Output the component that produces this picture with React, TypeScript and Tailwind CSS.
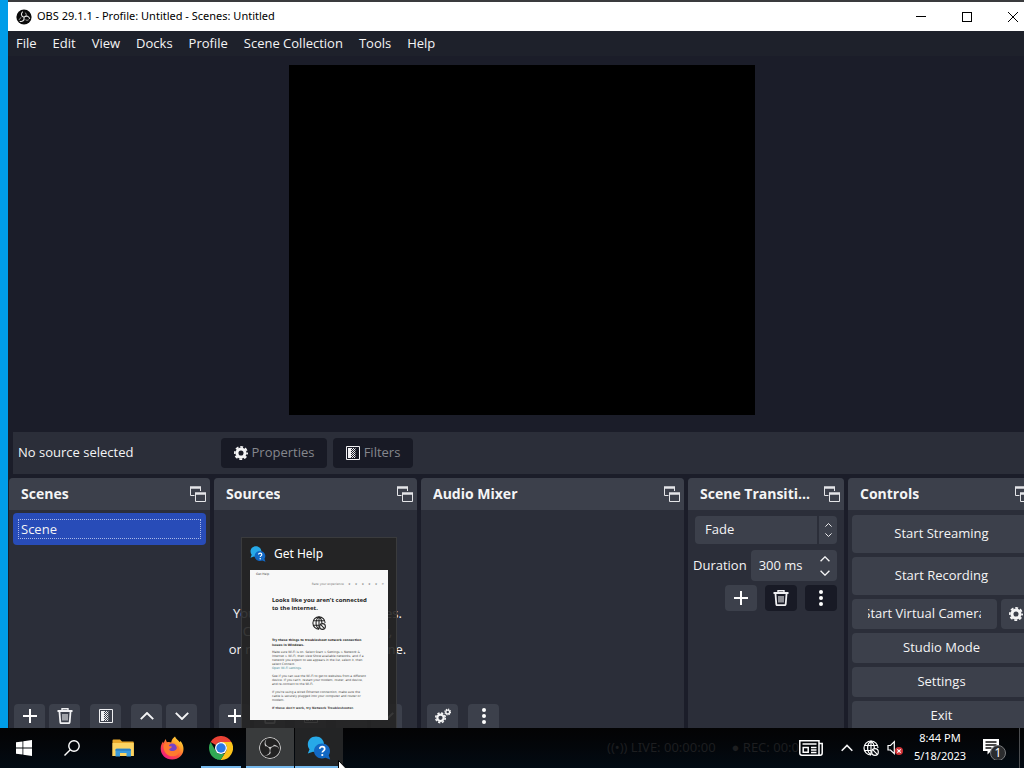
import type { ReactNode } from "react";
import { SiObsstudio } from "react-icons/si";

type IconProps = { className?: string };

function PopOutIcon({ className = "" }: IconProps) {
  return (
    <svg viewBox="0 0 16 16" className={`h-4 w-4 shrink-0 ${className}`} fill="none" stroke="#e4e5e8">
      <path d="M0 1.500h11" strokeWidth="2.400" />
      <path d="M.5 2v7.500h4M10.500 2v3" />
      <path d="M5 7.500h11" strokeWidth="2.400" />
      <path d="M5.500 8v7.500h10V8" />
    </svg>
  );
}

function PlusIcon() {
  return (
    <svg viewBox="0 0 14 14" className="h-3.5 w-3.5" stroke="#fefefe" strokeWidth="2">
      <path d="M7 0v14M0 7h14" />
    </svg>
  );
}

function TrashIcon() {
  return (
    <svg viewBox="0 0 16 16" className="h-4 w-4" fill="none" stroke="#f0f0f2">
      <path d="M.5 3h15" strokeWidth="2" />
      <path d="M5 2.200V.8h6v1.400" strokeWidth="1.400" />
      <path d="M2.500 4l.8 10.200q.1 1 1 1h7.400q.9 0 1-1L13.500 4" strokeWidth="1.800" />
      <path d="M6 6v6.500M8 6v6.500M10 6v6.500" strokeWidth="1.100" />
    </svg>
  );
}

function FilterIcon({ className = "h-3.5 w-3.5" }: IconProps) {
  return (
    <svg viewBox="0 0 14 14" className={className} fill="none">
      <path d="M.5.5h13v13H.5z" stroke="#f0f0f2" />
      <path d="M2 2h3v10H2z" fill="#f0f0f2" />
      <path d="M5.500 2v10M7.500 2v10" stroke="#f0f0f2" strokeDasharray="1 1" />
      <path d="M6.500 3v9M8.500 3v9" stroke="#f0f0f2" strokeDasharray="1 1" />
      <path d="M9.500 2v10" stroke="#85878d" strokeDasharray="1 1" />
    </svg>
  );
}

function ChevronIcon({ down, className = "h-2 w-3.5" }: IconProps & { down?: boolean }) {
  return (
    <svg viewBox="0 0 14 8" className={className} fill="none" stroke="#f4f4f5" strokeWidth="1.900">
      <path d={down ? "M.8 .8L7 7 13.200 .8" : "M.8 7.200L7 1 13.200 7.200"} />
    </svg>
  );
}

function DotsIcon() {
  return (
    <svg viewBox="0 0 4 16" className="h-4 w-1" fill="#fefefe">
      <circle cx="2" cy="2" r="2" />
      <circle cx="2" cy="8" r="2" />
      <circle cx="2" cy="14" r="2" />
    </svg>
  );
}

function GearIcon({ className = "h-3.5 w-3.5" }: IconProps) {
  return (
    <svg viewBox="0 0 16 16" className={className} fill="none" stroke="#f4f4f5">
      <circle cx="8" cy="8" r="4.600" strokeWidth="3.400" />
      <circle cx="8" cy="8" r="7" strokeWidth="2" strokeDasharray="3.300 2.198" strokeDashoffset="1.650" />
    </svg>
  );
}

function GearsIcon() {
  return (
    <svg viewBox="0 0 16 16" className="h-4 w-4" fill="none" stroke="#f4f4f5">
      <circle cx="5.500" cy="9.800" r="3.200" strokeWidth="2.200" />
      <circle cx="5.500" cy="9.800" r="4.800" strokeWidth="1.600" strokeDasharray="2.200 1.570" />
      <circle cx="12.700" cy="4" r="1.900" strokeWidth="1.400" />
      <circle cx="12.700" cy="4" r="2.900" strokeWidth="1.100" strokeDasharray="1.300 .977" />
    </svg>
  );
}

function ObsTitleIcon() {
  return (
    <svg viewBox="0 0 16 16" className="ml-2 h-4 w-4" fill="none" stroke="#e8e8e8" strokeWidth="1.100">
      <circle cx="8" cy="8" r="7.600" fill="#0a0a0a" stroke="none" />
      <path d="M8 8.300C4.800 7.500 4.800 4.200 6.800 2.600" />
      <path d="M8 8.300c2.300-2.400 5.200-.9 5.700 1.600" />
      <path d="M8 8.300c.8 3.200-1.900 4.800-4.300 3.900" />
      <path d="M10.200 6.800c.3-1.500-.3-2.700-1.300-3.300M9.500 10.800c1.300.7 2.400.5 3.200-.1M5.300 8.700c-1.300.4-2 1.300-2.100 2.200" strokeWidth=".7" />
    </svg>
  );
}

function OfflineGlobeIcon({ className = "" }: IconProps) {
  return (
    <svg viewBox="0 0 16 16" className={className} fill="none" stroke="currentColor" strokeWidth="1.200">
      <path d="M8 15A7 7 0 1 1 15 8" />
      <path d="M8 1C3.500 4 3.500 12 8 15M8 1c2.300 1.700 3.300 4.200 3.300 7M8 1v14M1.500 5.500h13M1.500 10.500H8" />
      <circle cx="12" cy="12" r="3.300" />
      <path d="M9.700 9.700l4.600 4.600" />
    </svg>
  );
}

function GetHelpIcon({ className = "" }: IconProps) {
  return (
    <svg viewBox="0 0 24 24" className={className}>
      <path d="M9 .5C4 .5.8 4 .8 8.200c0 2 .6 3.700 1.700 5L.8 17.500 6 15.800c5 1.500 11-2 11-7.600C17 4 13.500.5 9 .5z" fill="#27a9e8" />
      <path d="M15 7.500c-4.500 0-8 3.400-8 7.500s3.500 7.500 8 7.500c1.300 0 2.500-.2 3.500-.7l4.700 1.700-1.500-4.200c.8-1.200 1.300-2.700 1.300-4.300 0-4.100-3.500-7.500-8-7.500z" fill="#1268c4" />
      <path d="M12.800 12.800c0-3 4.900-2.800 4.900.1 0 1.900-2.400 1.900-2.400 3.700" fill="none" stroke="#fff" strokeWidth="1.700" />
      <circle cx="15.300" cy="19" r="1.100" fill="#fff" />
    </svg>
  );
}

function WindowsIcon() {
  return (
    <svg viewBox="0 0 16 16" className="h-4 w-4" fill="#fff">
      <path d="M0 2.300l6.500-.9v6.200H0zM7.300 1.300L16 0v7.600H7.300zM0 8.400h6.500v6.200L0 13.700zM7.300 8.400H16V16l-8.700-1.300z" />
    </svg>
  );
}

function SearchIcon() {
  return (
    <svg viewBox="0 0 16 16" className="h-4 w-4" fill="none" stroke="#fff" strokeWidth="1.400">
      <circle cx="10" cy="6" r="5.200" />
      <path d="M6.300 9.700L.5 15.500" />
    </svg>
  );
}

function ExplorerIcon() {
  return (
    <svg viewBox="0 0 22 18" className="h-[18px] w-[22px]">
      <path d="M.5 1.500Q.5.500 1.500.5H8l2 2h11q.8 0 .8 1V17H.5z" fill="#e9a92c" />
      <path d="M.5 4h21.300v13H.5z" fill="#fcd462" />
      <path d="M3.500 17.500V11q0-1.200 1.200-1.200h13q1.200 0 1.200 1.200v6.500h-4.400V14H8v3.500z" fill="#3b9bdc" />
      <path d="M3.500 11q0-1.200 1.200-1.200h13q1.200 0 1.200 1.200v.8H3.500z" fill="#2c80c4" />
    </svg>
  );
}

function FirefoxIcon() {
  return (
    <svg viewBox="0 0 24 24" className="h-6 w-6">
      <defs>
        <linearGradient id="fox" x1="1" y1="0" x2=".2" y2="1">
          <stop offset="0" stopColor="#fff044" />
          <stop offset=".35" stopColor="#ffa52b" />
          <stop offset=".65" stopColor="#ff4b3e" />
          <stop offset="1" stopColor="#f0168c" />
        </linearGradient>
      </defs>
      <path
        d="M15 .5c1 2.600 3.200 3.700 4.800 5.800l.7-1.300c2.200 2.800 3 5.200 3 8C23.500 19 18.500 23.500 12.200 23.500 5.700 23.500.7 18.800.7 12.700c0-3 1-5.400 2.300-7.200l.5 1.800L5.500 3l1.400 3.200c1.600-.5 3.100-.4 4.300.3C11.500 4 13 1.800 15 .5z"
        fill="url(#fox)"
      />
      <circle cx="12.200" cy="12.600" r="5" fill="#7542c8" />
      <path d="M3.500 9c2-2.500 5-2.500 7.700-1.600-1.500.5-2 1.300-2.300 2.500l3.300.9c-.8 1.500-2.700 1.400-3 2.700.8 2 4.700 2.100 6.800.2 1.300-1.200 1-3.500-.6-5 3.500.6 4.700 3.700 4 6.700-1 4-5.600 5.800-9.600 4.500C5.500 18.500 3 14 3.500 9z" fill="#ff7a2e" />
    </svg>
  );
}

function ChromeIcon() {
  return (
    <svg viewBox="0 0 24 24" className="h-6 w-6">
      <path d="M1.600 6A12 12 0 0 1 22.400 6H12a6 6 0 0 0-5.200 3z" fill="#e94235" />
      <path d="M1.600 6L6.800 15A6 6 0 0 0 12 18l-3 5.600A12 12 0 0 1 1.600 6z" fill="#31a853" />
      <path d="M22.400 6A12 12 0 0 1 11.500 24L17.200 15A6 6 0 0 0 17.200 9L12 6z" fill="#fcc31b" />
      <path d="M6.800 15l2.200 3.800 3-.8 3.300-.1L11.500 24a12 12 0 0 1-10-6.300z" fill="#31a853" />
      <circle cx="12" cy="12" r="6" fill="#fff" />
      <circle cx="12" cy="12" r="4.700" fill="#2979e6" />
    </svg>
  );
}

function NewsIcon() {
  return (
    <svg viewBox="0 0 24 16" className="h-4 w-6" fill="none" stroke="#fff" strokeWidth="1.500">
      <path d="M.8.8H20v14.400H3q-2.200 0-2.200-2.200zM20 3.500h3.200V13q0 2.200-2 2.200H19" />
      <path d="M3.500 4H17.500M12 7.500h5.500M12 10h5.500M12 12.500h5.500" />
      <path d="M4.200 7.500h5v4.800h-5z" />
    </svg>
  );
}

function MutedIcon() {
  return (
    <svg viewBox="0 0 16 16" className="h-4 w-4">
      <path d="M1 5.500h2.500L7.300 1.700v12L3.500 10H1z" fill="none" stroke="#fff" strokeWidth="1.200" />
      <circle cx="12" cy="11" r="4" fill="#d13438" />
      <path d="M10.300 9.300l3.400 3.400M13.700 9.300l-3.400 3.400" stroke="#fff" strokeWidth="1.100" />
    </svg>
  );
}

const menus = ["File", "Edit", "View", "Docks", "Profile", "Scene Collection", "Tools", "Help"];

function TitleBar() {
  return (
    <header className="flex h-[29px] shrink-0 items-center bg-white text-black">
      <ObsTitleIcon />
      <h1 className="ml-[5px] flex-1 font-['Noto_Sans'] text-[11px]">OBS 29.1.1 - Profile: Untitled - Scenes: Untitled</h1>
      <button aria-label="Minimize" className="flex h-full w-[46px] items-center justify-center">
        <span className="h-px w-2.5 bg-black" />
      </button>
      <button aria-label="Maximize" className="flex h-full w-[46px] items-center justify-center">
        <span className="h-2.5 w-2.5 border border-black" />
      </button>
      <button aria-label="Close" className="flex h-full w-[46px] items-center justify-center">
        <svg viewBox="0 0 10 10" className="h-2.5 w-2.5" stroke="#000">
          <path d="M0 0l10 10M10 0L0 10" />
        </svg>
      </button>
    </header>
  );
}

function Dock({ title, children }: { title: string; children?: ReactNode }) {
  return (
    <section className="flex min-w-0 flex-col overflow-hidden rounded-t bg-[#2b2e39]">
      <div className="flex h-8 shrink-0 items-center justify-between gap-3 bg-[#3c404b] pr-1 pl-3">
        <h2 className="truncate text-sm font-bold">{title}</h2>
        <PopOutIcon />
      </div>
      {children}
    </section>
  );
}

function ToolButton({ label, children }: { label: string; children: ReactNode }) {
  return (
    <button aria-label={label} className="flex h-6 w-[31px] shrink-0 items-center justify-center rounded-t bg-[#3c404b]">
      {children}
    </button>
  );
}

function ListTools() {
  return (
    <div className="mt-auto flex gap-1 pl-[5px]">
      <ToolButton label="Add"><PlusIcon /></ToolButton>
      <ToolButton label="Remove"><TrashIcon /></ToolButton>
      <div className="mx-1.5"><ToolButton label="Filters"><FilterIcon /></ToolButton></div>
      <ToolButton label="Move up"><ChevronIcon /></ToolButton>
      <ToolButton label="Move down"><ChevronIcon down /></ToolButton>
    </div>
  );
}

function SourcesDock() {
  return (
    <Dock title="Sources">
      <div className="flex flex-1 items-end justify-center pb-[46px]">
        <p className="pl-1 text-center leading-[18px] whitespace-nowrap">
          You don't have any sources.
          <br />
          Click the + button below,
          <br />
          or right click here to add one.
        </p>
      </div>
      <ListTools />
    </Dock>
  );
}

function TransitionsDock() {
  return (
    <Dock title="Scene Transitions">
      <div className="flex flex-col gap-1 pt-1.5 pr-[7px] pl-[5px]">
        <div className="relative ml-0.5 h-7 rounded bg-[#3c404b]">
          <select aria-label="Transition" className="h-full w-full appearance-none pl-2.5">
            <option>Fade</option>
          </select>
          <span className="pointer-events-none absolute inset-y-0 right-0 flex w-5 flex-col items-center justify-center gap-1.5 border-l-2 border-[#2b2e39]">
            <ChevronIcon className="h-1 w-[7px]" />
            <ChevronIcon down className="h-1 w-[7px]" />
          </span>
        </div>
        <div className="flex items-center justify-between gap-1 pt-0.5">
          <label htmlFor="duration">Duration</label>
          <div className="flex h-[31px] w-[87px] items-center rounded bg-[#3c404b]">
            <input id="duration" defaultValue="300 ms" className="w-0 flex-1 pl-2 outline-none" />
            <div className="flex w-6 flex-col items-center gap-2">
              <button aria-label="Increase"><ChevronIcon className="h-1.5 w-2.5" /></button>
              <button aria-label="Decrease"><ChevronIcon down className="h-1.5 w-2.5" /></button>
            </div>
          </div>
        </div>
        <div className="flex justify-end gap-2">
          <button aria-label="Add transition" className="flex h-[26px] w-8 items-center justify-center rounded bg-[#3c404b]"><PlusIcon /></button>
          <button aria-label="Remove transition" className="flex h-[26px] w-8 items-center justify-center rounded bg-[#181a25]"><TrashIcon /></button>
          <button aria-label="Transition properties" className="flex h-[26px] w-8 items-center justify-center rounded bg-[#181a25]"><DotsIcon /></button>
        </div>
      </div>
    </Dock>
  );
}

function ControlsDock() {
  return (
    <Dock title="Controls">
      <div className="flex flex-col gap-1 px-1 pt-[5px]">
        <button className="h-[38px] rounded bg-[#3c404b]">Start Streaming</button>
        <button className="h-[38px] rounded bg-[#3c404b]">Start Recording</button>
        <div className="flex gap-1">
          <button className="h-[30px] min-w-0 flex-1 rounded bg-[#3c404b] px-4">
            <span className="flex justify-center overflow-hidden whitespace-nowrap">Start Virtual Camera</span>
          </button>
          <button aria-label="Configure virtual camera" className="flex h-[30px] w-[30px] items-center justify-center rounded bg-[#3c404b]">
            <GearIcon />
          </button>
        </div>
        <button className="h-[30px] rounded bg-[#3c404b]">Studio Mode</button>
        <button className="h-[30px] rounded bg-[#3c404b]">Settings</button>
        <button className="h-[30px] rounded bg-[#3c404b]">Exit</button>
      </div>
    </Dock>
  );
}

function GetHelpPreview() {
  return (
    <aside className="absolute bottom-10 left-[241px] h-[191px] w-[156px] border border-b-0 border-[#3a3b3d] bg-[#242424]/90 px-2 font-['Noto_Sans'] text-white">
      <div className="flex h-8 items-center gap-2">
        <GetHelpIcon className="h-4 w-4" />
        <h2 className="text-xs">Get Help</h2>
      </div>
      <div className="flex h-[150px] flex-col bg-[#f8f8f8] pr-5 pl-[22px] font-['DejaVu_Sans'] text-[3px] leading-1 text-[#444]">
        <div className="-mx-4 pt-0.5">Get Help</div>
        <div className="-mr-4 flex justify-end gap-1 pt-1.5 text-[#777]">
          <span>Rate your experience</span>
          <span>★</span><span>★</span><span>★</span><span>★</span><span>★</span>
          <span>✕</span>
        </div>
        <h3 className="mt-2.5 font-['Noto_Sans'] text-[6px] leading-2 font-bold whitespace-nowrap text-[#222]">
          Looks like you aren't connected
          <br />
          to the internet.
        </h3>
        <OfflineGlobeIcon className="mt-1 mr-0.5 h-3.5 w-3.5 shrink-0 self-center text-[#222]" />
        <p className="mt-2 leading-[5px] font-bold text-[#222]">Try these things to troubleshoot network connection issues in Windows.</p>
        <p className="mt-0.5">Make sure Wi-Fi is on. Select Start &gt; Settings &gt; Network &amp; Internet &gt; Wi-Fi, then view Show available networks, and if a network you expect to see appears in the list, select it, then select Connect.</p>
        <a href="#settings" className="text-[#3f8794]">Open Wi-Fi settings</a>
        <p className="mt-1">See if you can use the Wi-Fi to get to websites from a different device. If you can't, restart your modem, router, and device, and re-connect to the Wi-Fi.</p>
        <p className="mt-1">If you're using a wired Ethernet connection, make sure the cable is securely plugged into your computer and router or modem.</p>
        <p className="mt-1 font-bold">If these don't work, try Network Troubleshooter.</p>
      </div>
    </aside>
  );
}

function TaskButton({ label, className = "", children }: { label: string; className?: string; children: ReactNode }) {
  return (
    <button aria-label={label} className={`flex h-full w-12 items-center justify-center ${className}`}>
      {children}
    </button>
  );
}

function Taskbar() {
  return (
    <footer className="flex h-10 shrink-0 items-center bg-linear-to-b from-[#030304] to-[#020b13] font-['Noto_Sans'] text-white">
      <div className="flex h-full">
        <TaskButton label="Start"><WindowsIcon /></TaskButton>
        <TaskButton label="Search"><SearchIcon /></TaskButton>
      </div>
      <nav className="ml-[3px] flex h-full gap-px">
        <TaskButton label="File Explorer"><ExplorerIcon /></TaskButton>
        <TaskButton label="Firefox"><FirefoxIcon /></TaskButton>
        <div className="flex flex-col items-center">
          <TaskButton label="Chrome"><ChromeIcon /></TaskButton>
          <span className="-mt-0.5 h-0.5 w-10 bg-[#76b9ed]" />
        </div>
        <TaskButton label="OBS Studio" className="border-b-2 border-[#76b9ed] bg-[#393b3c] pt-0.5"><SiObsstudio className="h-[22px] w-[22px] rounded-full bg-[#222] text-[#c9c9c9]" /></TaskButton>
        <TaskButton label="Get Help" className="border-b-2 border-[#76b9ed] bg-[#232425] pt-0.5"><GetHelpIcon className="h-6 w-6" /></TaskButton>
      </nav>
      <div className="flex flex-1 items-center justify-end gap-4 overflow-hidden text-[13px] whitespace-nowrap text-[#1d1e20]">
        <span>((•)) LIVE: 00:00:00</span>
        <span>● REC: 00:0</span>
      </div>
      <button aria-label="News" className="mr-[18px]"><NewsIcon /></button>
      <button aria-label="Show hidden icons" className="mr-2.5"><ChevronIcon className="h-2 w-3" /></button>
      <OfflineGlobeIcon className="mr-2 h-4 w-4" />
      <MutedIcon />
      <time className="ml-2.5 w-[54px] pb-0.5 text-center text-[11px] leading-[18px]">
        8:44 PM
        <br />
        5/18/2023
      </time>
      <button aria-label="1 notification" className="relative ml-[15px] h-6 w-6">
        <svg viewBox="0 0 24 24" className="h-6 w-6">
          <path d="M1 3h16v12H9l-3.500 3.500V15H1z" fill="#fff" />
          <path d="M3.500 6h11M3.500 9h11M3.500 12h6" stroke="#111" strokeWidth="1.300" />
          <circle cx="16" cy="17" r="7.500" fill="#2b2c2e" stroke="#77797c" />
        </svg>
        <span className="absolute top-[9px] left-3 w-2 text-center text-xs leading-4">1</span>
      </button>
      <span className="mr-1 ml-[13px] h-full w-px bg-[#4b4d50]" />
    </footer>
  );
}

export default function App() {
  return (
    <div className="relative flex h-screen flex-col overflow-hidden bg-[#009de9]">
      <main className="-mr-3 ml-2 flex min-h-0 flex-1 flex-col border-t-2 border-[#3a3b3d] bg-[#1b1d29] font-['Open_Sans'] text-[13px] text-[#f4f4f5]">
        <TitleBar />
        <nav className="flex h-[25px] shrink-0 items-center gap-4 bg-[#1e212b] pl-2">
          {menus.map((menu) => (
            <button key={menu}>{menu}</button>
          ))}
        </nav>

        <div className="flex min-h-0 flex-1 justify-center pt-[9px] pb-[17px]">
          <div className="aspect-[4/3] h-full bg-black" />
        </div>

        {/* Source toolbar */}
        <div className="ml-[5px] flex h-[42px] shrink-0 items-center gap-1.5 bg-[#2b2e39] pl-[5px]">
          <span className="w-[197px]">No source selected</span>
          <button className="flex h-[30px] w-[106px] items-center justify-center gap-1 rounded bg-[#181a25] text-[#85878d]">
            <GearIcon /> Properties
          </button>
          <button className="flex h-[30px] w-20 items-center justify-center gap-1 rounded bg-[#181a25] text-[#85878d]">
            <FilterIcon /> Filters
          </button>
        </div>

        <div className="mx-px mt-1 grid h-[250px] shrink-0 grid-cols-[201fr_203fr_263fr_156fr_187fr] gap-1">
          <Dock title="Scenes">
            <ul className="px-1 pt-[3px]">
              <li className="rounded bg-[#284cb8] px-[5px] py-1.5">
                <button className="block w-full border border-dotted border-[#a9b8e8] pl-0.5 text-left leading-[18px]">Scene</button>
              </li>
            </ul>
            <ListTools />
          </Dock>
          <SourcesDock />
          <Dock title="Audio Mixer">
            <div className="mt-auto flex gap-2.5 pl-1.5">
              <ToolButton label="Advanced audio properties"><GearsIcon /></ToolButton>
              <ToolButton label="Audio mixer menu"><DotsIcon /></ToolButton>
            </div>
          </Dock>
          <TransitionsDock />
          <ControlsDock />
        </div>
      </main>
      <Taskbar />
      <GetHelpPreview />
      <svg viewBox="0 0 12 19" className="absolute -bottom-[11px] left-[338px] h-[19px] w-3">
        <path d="M.5.5v16l3.800-3.600 2.500 5.600 2.200-1-2.500-5.500h5z" fill="#fff" stroke="#000" />
      </svg>
    </div>
  );
}
